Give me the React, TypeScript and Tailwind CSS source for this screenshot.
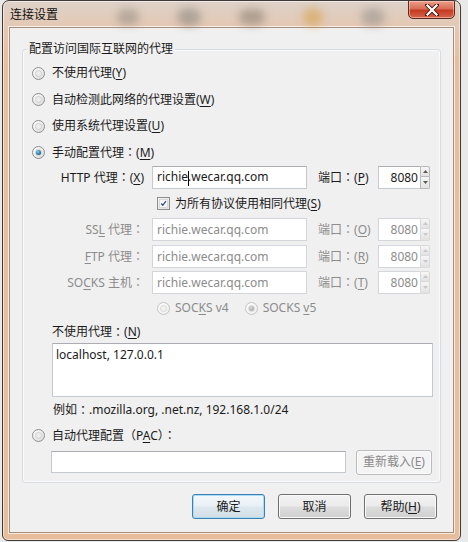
import React from "react";

const FONT = "font-['Noto_Sans','Noto_Sans_CJK_SC',sans-serif]";

function U({ c }: { c: string }) {
  return <span className="underline decoration-1 underline-offset-[2px]">{c}</span>;
}

function C() {
  return <span className="font-['Noto_Sans_CJK_TC',sans-serif]">：</span>;
}

function Radio({ checked, disabled }: { checked?: boolean; disabled?: boolean }) {
  return (
    <span
      className={
        "relative inline-flex items-center justify-center w-[13px] h-[13px] rounded-full border shrink-0 " +
        (disabled
          ? "border-[#c5c5c5] bg-[linear-gradient(135deg,#fdfdfd,#ededed)]"
          : "border-[#8e8f8f] bg-[linear-gradient(135deg,#ffffff,#d9d9d9)]")
      }
    >
      <span
        className={
          "w-[7px] h-[7px] rounded-full " +
          (disabled ? "bg-[#f2f2f2] border border-[#d8d8d8]" : "bg-[#ededed] border border-[#cfcfcf]")
        }
      >
        {checked && (
          <span
            className={
              "block w-[5px] h-[5px] rounded-full " +
              (disabled
                ? "bg-[radial-gradient(circle_at_40%_35%,#d8d8d8,#9a9a9a)]"
                : "bg-[radial-gradient(circle_at_40%_35%,#7fd0ef,#1d6790_70%,#0e4466)]")
            }
          />
        )}
      </span>
    </span>
  );
}

function Checkbox() {
  return (
    <span className="inline-flex items-center justify-center w-[13px] h-[13px] border border-[#8e8f8f] bg-[linear-gradient(135deg,#f4f4f4,#dedede)] shrink-0">
      <span className="w-[9px] h-[9px] bg-[#f8f8f8] border border-[#dadada] flex items-center justify-center">
        <svg width="9" height="9" viewBox="0 0 9 9" className="-mt-[1px]">
          <path d="M1.5 4.5 L3.6 6.8 L7.6 1.4" stroke="#2d4a8a" strokeWidth="1.6" fill="none" />
        </svg>
      </span>
    </span>
  );
}

function Spinner({ disabled }: { disabled?: boolean }) {
  const b = disabled ? "border-[#dadada]" : "border-[#b8b8b8]";
  const a = disabled ? "#c8c8c8" : "#5a5a5a";
  return (
    <div className="flex flex-col w-[10px] h-[23px]">
      <div className={"h-[11px] border rounded-tr-[2px] bg-[linear-gradient(#f6f6f6,#e2e2e2)] flex items-center justify-center " + b}>
        <svg width="5" height="3" viewBox="0 0 5 3">
          <path d="M0 3 L2.5 0 L5 3 Z" fill={a} />
        </svg>
      </div>
      <div className={"h-[12px] border border-t-0 rounded-br-[2px] bg-[linear-gradient(#f6f6f6,#e2e2e2)] flex items-center justify-center " + b}>
        <svg width="5" height="3" viewBox="0 0 5 3">
          <path d="M0 0 L2.5 3 L5 0 Z" fill={a} />
        </svg>
      </div>
    </div>
  );
}

function TextBox({
  value,
  disabled,
  w,
  caret,
}: {
  value: string;
  disabled?: boolean;
  w: string;
  caret?: boolean;
}) {
  return (
    <div
      className={
        "h-[23px] flex items-center px-[4px] bg-white border " +
        w +
        " " +
        (disabled
          ? "border-[#d3d6da] text-[#8c8c8c]"
          : "border-[#c5cad0] border-t-[#abadb3] text-[#1a1a1a]")
      }
    >
      {caret ? (
        <span>
          richie
          <span className="inline-block w-[1px] h-[15px] bg-black align-middle -mx-[0.5px]" />
          .wecar.qq.com
        </span>
      ) : (
        value
      )}
    </div>
  );
}

function PortBox({ disabled }: { disabled?: boolean }) {
  return (
    <div className="flex">
      <div
        className={
          "w-[42px] h-[23px] flex items-center justify-end pr-[2px] bg-white border border-r-0 " +
          (disabled ? "border-[#d3d6da] text-[#8c8c8c]" : "border-[#c5cad0] border-t-[#abadb3] text-[#1a1a1a]")
        }
      >
        8080
      </div>
      <Spinner disabled={disabled} />
    </div>
  );
}

function ProxyRow({
  label,
  portLabel,
  disabled,
  caret,
  className,
}: {
  label: React.ReactNode;
  portLabel: React.ReactNode;
  disabled?: boolean;
  caret?: boolean;
  className?: string;
}) {
  const tc = disabled ? "text-[#8c8c8c]" : "text-[#1a1a1a]";
  return (
    <div className={"flex items-center h-[25px] " + (className || "")}>
      <div className={"w-[121px] text-right whitespace-nowrap " + tc}>{label}</div>
      <div className="ml-[8px]">
        <TextBox value="richie.wecar.qq.com" disabled={disabled} w="w-[155px]" caret={caret} />
      </div>
      <div className={"ml-[11px] w-[52px] whitespace-nowrap " + tc}>{portLabel}</div>
      <div className="ml-[8px]">
        <PortBox disabled={disabled} />
      </div>
    </div>
  );
}

function Button({
  children,
  def,
  disabled,
  w,
}: {
  children: React.ReactNode;
  def?: boolean;
  disabled?: boolean;
  w: string;
}) {
  let cls = "";
  if (disabled)
    cls = "border-[#b8bcbf] bg-[#f4f4f4] text-[#8a8a8a] shadow-[inset_0_0_0_1px_#fbfbfb]";
  else if (def)
    cls =
      "border-[#3c7fb1] text-[#1a1a1a] bg-[linear-gradient(#f3f8fb_0%,#eaf1f6_45%,#dde7ee_55%,#d3dde5_100%)] shadow-[inset_0_0_0_1px_#a8dcf7]";
  else
    cls =
      "border-[#707070] text-[#1a1a1a] bg-[linear-gradient(#f2f2f2_0%,#ebebeb_48%,#dddddd_52%,#cfcfcf_100%)] shadow-[inset_0_0_0_1px_#fafafa]";
  return (
    <div className={"h-[25px] flex items-center justify-center rounded-[3px] border " + w + " " + cls}>
      {children}
    </div>
  );
}

export default function App() {
  return (
    <div className={"w-[468px] h-[542px] bg-[#e9e9e9] pl-[2px] text-[12px] leading-[16px] " + FONT}>
      <div className="w-[459px] h-[541px] rounded-t-[7px] rounded-b-[6px] border border-[#3f3a36] bg-[linear-gradient(#ddd2c9_0px,#e4c8b3_26px,#e8be9e_60px,#e8bd9c_100%)] shadow-[inset_0_0_0_1px_rgba(255,255,255,0.55)] flex flex-col px-[6px] pb-[7px] overflow-hidden">
        {/* title bar */}
        <div className="h-[26px] flex items-start">
          <div className="pl-[1px] pt-[6px] text-[#111] text-[12px] leading-[16px] w-[100px]">连接设置</div>
          <div className="flex-1 flex items-center pt-[6px] h-[26px] gap-[38px] pl-[8px] opacity-60">
            <div className="w-[22px] h-[16px] rounded-full bg-[#9a8f86] blur-[4px]" />
            <div className="w-[24px] h-[18px] rounded-full bg-[#8e8880] blur-[4px]" />
            <div className="w-[26px] h-[16px] rounded-full bg-[#8f8274] blur-[4px]" />
            <div className="w-[20px] h-[18px] rounded-full bg-[#d6a24a] blur-[4px]" />
            <div className="w-[24px] h-[18px] rounded-full bg-[#9a948e] blur-[4px]" />
          </div>
          <div className="-mt-[1px] mr-[-1px] w-[47px] h-[19px] rounded-b-[5px] border border-[#5e2b24] bg-[linear-gradient(#eba08c_0%,#d96d55_45%,#c63a22_55%,#d5654a_100%)] shadow-[inset_0_0_0_1px_rgba(255,220,210,0.5)] flex items-center justify-center shrink-0">
            <svg width="14" height="12" viewBox="0 0 14 12">
              <path d="M2 1 L12 11 M12 1 L2 11" stroke="#4a1a12" strokeWidth="4" strokeLinecap="square" />
              <path d="M2.5 1.5 L11.5 10.5 M11.5 1.5 L2.5 10.5" stroke="#ffffff" strokeWidth="2.2" strokeLinecap="square" />
            </svg>
          </div>
        </div>
        {/* client */}
        <div className="flex-1 border border-[#a88d7a] bg-[#f0f0f0] shadow-[0_0_0_1px_rgba(255,255,255,0.7)] flex flex-col text-[#1a1a1a]">
          <fieldset className="ml-[12px] mt-[13px] w-[419px] border border-[#d5dbe0] rounded-[3px] pb-[6px] shadow-[inset_0_0_0_1px_#fafafa]">
            <legend className="ml-[4px] px-[2px] leading-[16px]">配置访问国际互联网的代理</legend>
            <div className="pl-[9px] mt-[3px] flex flex-col">
              <div className="h-[26px] flex items-center gap-[7px]">
                <Radio />
                <span>
                  不使用代理(<U c="Y" />)
                </span>
              </div>
              <div className="h-[27px] flex items-center gap-[7px]">
                <Radio />
                <span>
                  自动检测此网络的代理设置(<U c="W" />)
                </span>
              </div>
              <div className="h-[26px] flex items-center gap-[7px]">
                <Radio />
                <span>
                  使用系统代理设置(<U c="U" />)
                </span>
              </div>
              <div className="h-[26px] flex items-center gap-[7px]">
                <Radio checked />
                <span>
                  手动配置代理<C />(<U c="M" />)
                </span>
              </div>
            </div>
            <div className="flex flex-col">
              <ProxyRow
                label={
                  <>
                    HTTP 代理<C />(<U c="X" />)
                  </>
                }
                portLabel={
                  <>
                    端口<C />(<U c="P" />)
                  </>
                }
                caret
                className="h-[23px]"
              />
              <div className="h-[27px] flex items-center pl-[134px] gap-[5px]">
                <Checkbox />
                <span>
                  为所有协议使用相同代理(<U c="S" />)
                </span>
              </div>
              <ProxyRow
                label={
                  <>
                    SS<U c="L" /> 代理<C />
                  </>
                }
                portLabel={
                  <>
                    端口<C />(<U c="O" />)
                  </>
                }
                disabled
              />
              <ProxyRow
                label={
                  <>
                    <U c="F" />
                    TP 代理<C />
                  </>
                }
                portLabel={
                  <>
                    端口<C />(<U c="R" />)
                  </>
                }
                disabled
                className="mt-[2px]"
              />
              <ProxyRow
                label={
                  <>
                    SO<U c="C" />
                    KS 主机<C />
                  </>
                }
                portLabel={
                  <>
                    端口<C />(<U c="T" />)
                  </>
                }
                disabled
                className="mt-[1px]"
              />
              <div className="h-[26px] flex items-center pl-[134px] text-[#8c8c8c]">
                <Radio disabled />
                <span className="ml-[5px]">
                  SOC<U c="K" />S v4
                </span>
                <span className="ml-[16px]">
                  <Radio disabled checked />
                </span>
                <span className="ml-[5px]">
                  SOCKS <U c="v" />5
                </span>
              </div>
            </div>
            <div className="pl-[29px] flex flex-col">
              <div className="h-[21px] flex items-center">
                不使用代理<C />(<U c="N" />)
              </div>
              <div className="mt-[1px] w-[381px] h-[54px] bg-white border border-[#c5cad0] border-t-[#abadb3] px-[3px] pt-[3px]">
                localhost, 127.0.0.1
              </div>
              <div className="h-[25px] flex items-center pl-[1px]">
                例如<C />.mozilla.org, .net.nz, 192.168.1.0/24
              </div>
            </div>
            <div className="pl-[9px] h-[26px] flex items-center gap-[7px]">
              <Radio />
              <span>
                自动代理配置<span className="font-['Noto_Sans_CJK_TC',sans-serif]">（</span>P<U c="A" />C
                <span className="font-['Noto_Sans_CJK_TC',sans-serif]">）</span>
                <C />
              </span>
            </div>
            <div className="pl-[28px] h-[28px] flex items-center">
              <div className="w-[295px] h-[22px] bg-white border border-[#c5cad0] border-t-[#abadb3]" />
              <div className="ml-[10px]">
                <Button disabled w="w-[76px]">
                  重新载入(<U c="E" />)
                </Button>
              </div>
            </div>
          </fieldset>
          <div className="mt-[11px] flex justify-end gap-[13px] pr-[16px]">
            <Button def w="w-[73px]">
              确定
            </Button>
            <Button w="w-[73px]">取消</Button>
            <Button w="w-[73px]">
              帮助(<U c="H" />)
            </Button>
          </div>
        </div>
      </div>
    </div>
  );
}
